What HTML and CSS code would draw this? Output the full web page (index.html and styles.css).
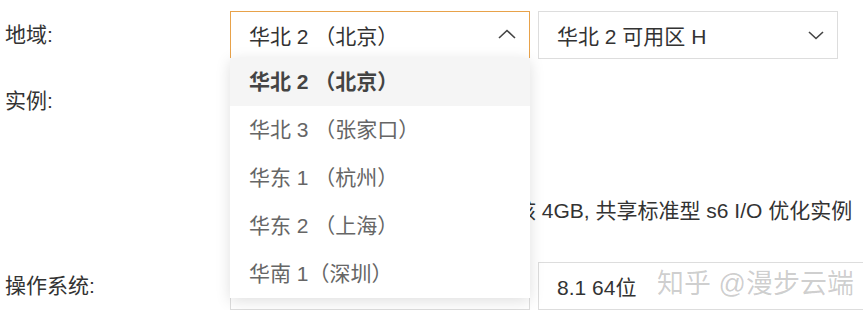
FILE: index.html
```html
<!DOCTYPE html>
<html lang="zh-CN">
<head>
    <meta charset="UTF-8">
    <meta name="viewport" content="width=device-width, initial-scale=1.0">
    <title>地域选择</title>
    <link rel="stylesheet" href="styles.css">
</head>
<body>
    <div class="form">
        <div class="row region">
            <div class="label">地域:</div>
            <div class="field">
                <div class="select-wrap">
                    <div class="select open">
                        <span>华北 2 （北京）</span>
                        <svg class="arrow up" width="18" height="10" viewBox="0 0 18 10"><path d="M1 9 L9 1.5 L17 9" fill="none" stroke="#444" stroke-width="1.6"/></svg>
                    </div>
                    <ul class="dropdown">
                        <li class="active">华北 2 （北京）</li>
                        <li>华北 3 （张家口）</li>
                        <li>华东 1 （杭州）</li>
                        <li>华东 2 （上海）</li>
                        <li>华南 1（深圳）</li>
                    </ul>
                </div>
                <div class="select">
                    <span>华北 2 可用区 H</span>
                    <svg class="arrow" width="16" height="9" viewBox="0 0 16 9"><path d="M1 1 L8 7.5 L15 1" fill="none" stroke="#444" stroke-width="1.6"/></svg>
                </div>
            </div>
        </div>

        <div class="row instance">
            <div class="label">实例:</div>
            <div class="field">
                <p class="spec">核 4GB, 共享标准型 s6 I/O 优化实例</p>
            </div>
        </div>

        <div class="row os">
            <div class="label">操作系统:</div>
            <div class="field">
                <div class="select"></div>
                <div class="select wide"><span>8.1 64位</span></div>
            </div>
        </div>

        <div class="watermark">知乎 @漫步云端</div>
    </div>
</body>
</html>
```

FILE: styles.css
```css
body {
    margin: 0;
    background: #fff;
    font-family: "Liberation Sans", "Noto Sans CJK SC", sans-serif;
    font-size: 21px;
    color: #333;
    overflow: hidden;
}
.form {
    position: relative;
    padding: 11px 0 0 5px;
}
.row {
    display: flex;
}
.label {
    width: 225px;
    flex-shrink: 0;
    line-height: 48px;
    color: #333;
}
.field {
    display: flex;
    gap: 8px;
}
.select-wrap {
    position: relative;
}
.select {
    box-sizing: border-box;
    width: 300px;
    height: 48px;
    padding: 0 13px 0 18px;
    border: 1px solid #ddd;
    background: #fff;
    display: flex;
    align-items: center;
    justify-content: space-between;
    white-space: nowrap;
    overflow: hidden;
}
.select.open {
    border-color: #e8a24a;
}
.select.wide {
    width: 340px;
}
.arrow.up {
    margin-top: -3px;
}
.dropdown {
    position: absolute;
    z-index: 5;
    top: 47px;
    left: 0;
    width: 300px;
    margin: 0;
    padding: 0;
    list-style: none;
    background: #fff;
    box-shadow: 0 3px 14px rgba(0, 0, 0, 0.13);
}
.dropdown li {
    height: 48px;
    line-height: 48px;
    padding-left: 19px;
    color: #666;
}
.dropdown li.active {
    background: #f5f5f5;
    color: #444;
    font-weight: bold;
}
.row.instance {
    margin-top: 18px;
    height: 167px;
}
.spec {
    margin: 110px 0 0 285px;
    line-height: 48px;
    white-space: nowrap;
    color: #333;
}
.row.os {
    margin-top: 18px;
}
.watermark {
    position: absolute;
    z-index: 6;
    left: 657px;
    top: 262px;
    font-size: 27px;
    color: rgba(0, 0, 0, 0.2);
    white-space: nowrap;
}
```
